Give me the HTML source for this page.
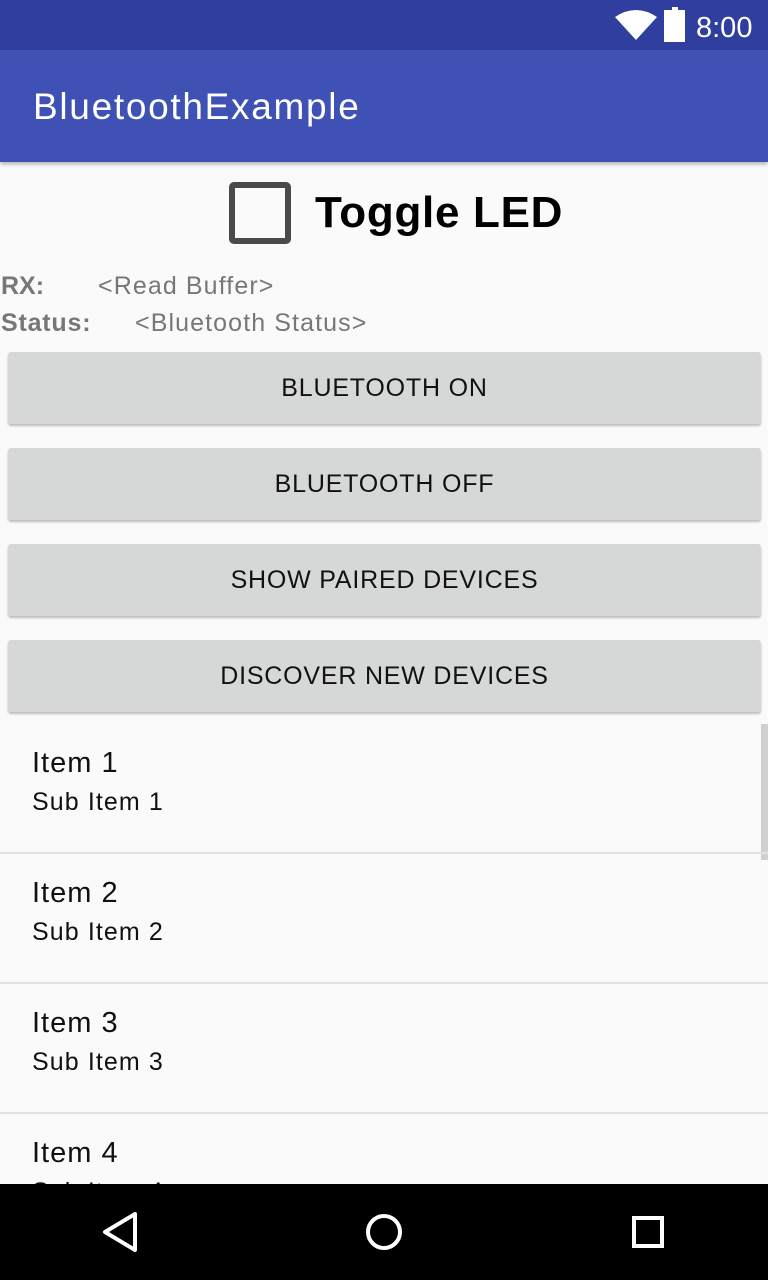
<!DOCTYPE html>
<html><head><style>
body{margin:0;width:768px;height:1280px;background:#fafafa;font-family:"Liberation Sans",sans-serif;position:relative;overflow:hidden}
.abs{position:absolute}
.btn{position:absolute;left:8px;width:753px;height:72px;background:#d6d7d7;border-radius:3px;box-shadow:0 2px 2px rgba(0,0,0,.25);text-align:center;line-height:72px;font-size:25px;color:#111;letter-spacing:0.8px}
.it{position:absolute;left:32px;font-size:29px;color:#111;letter-spacing:1px}
.sub{position:absolute;left:32px;font-size:25px;color:#111;letter-spacing:1.1px}
.div{position:absolute;left:0;width:768px;height:2px;background:#e2e2e2}
</style></head><body>
<div class="abs" style="top:0;left:0;width:768px;height:50px;background:#303f9f"></div>
<svg class="abs" style="left:614px;top:9px" width="44" height="32"><path d="M1 8 Q22 -6 43 8 L22 31 Z" fill="#fff"/></svg>
<div class="abs" style="left:664px;top:10px;width:21px;height:32px;background:#fff"></div>
<div class="abs" style="left:672px;top:7px;width:6px;height:4px;background:#fff"></div>
<div class="abs" style="left:696px;top:12px;font-size:29px;color:#fff">8:00</div>
<div class="abs" style="top:50px;left:0;width:768px;height:112px;background:#3f51b5;box-shadow:0 2px 4px rgba(0,0,0,.3)"></div>
<div class="abs" style="left:33px;top:86px;font-size:37px;color:#fff;letter-spacing:1.7px">BluetoothExample</div>
<div class="abs" style="left:229px;top:182px;width:62px;height:62px;border:6px solid #4a4a4a;border-radius:5px;box-sizing:border-box"></div>
<div class="abs" style="left:315px;top:188px;font-size:44px;font-weight:bold;color:#000;letter-spacing:0.7px">Toggle LED</div>
<div class="abs" style="left:1px;top:272px;font-size:25px;font-weight:bold;color:#777">RX:</div>
<div class="abs" style="left:98px;top:272px;font-size:25px;color:#777;letter-spacing:1.1px">&lt;Read Buffer&gt;</div>
<div class="abs" style="left:1px;top:309px;font-size:25px;font-weight:bold;color:#777;letter-spacing:0.8px">Status:</div>
<div class="abs" style="left:135px;top:309px;font-size:25px;color:#777;letter-spacing:1.1px">&lt;Bluetooth Status&gt;</div>
<div class="btn" style="top:352px">BLUETOOTH ON</div>
<div class="btn" style="top:448px">BLUETOOTH OFF</div>
<div class="btn" style="top:544px">SHOW PAIRED DEVICES</div>
<div class="btn" style="top:640px">DISCOVER NEW DEVICES</div>
<div class="abs" style="left:761px;top:724px;width:7px;height:136px;background:#d0d0d0"></div>
<div class="it" style="top:747px">Item 1</div><div class="sub" style="top:788px">Sub Item 1</div>
<div class="div" style="top:852px"></div>
<div class="it" style="top:877px">Item 2</div><div class="sub" style="top:918px">Sub Item 2</div>
<div class="div" style="top:982px"></div>
<div class="it" style="top:1007px">Item 3</div><div class="sub" style="top:1048px">Sub Item 3</div>
<div class="div" style="top:1112px"></div>
<div class="it" style="top:1137px">Item 4</div><div class="sub" style="top:1178px">Sub Item 4</div>
<div class="abs" style="top:1184px;left:0;width:768px;height:96px;background:#000"></div>
<svg class="abs" style="left:0;top:1184px" width="768" height="96">
<path d="M135 30 L105 48 L135 66 Z" fill="none" stroke="#fff" stroke-width="4" stroke-linejoin="round"/>
<circle cx="384" cy="48" r="16" fill="none" stroke="#fff" stroke-width="4"/>
<rect x="634" y="34" width="28" height="28" fill="none" stroke="#fff" stroke-width="4"/>
</svg>
</body></html>
